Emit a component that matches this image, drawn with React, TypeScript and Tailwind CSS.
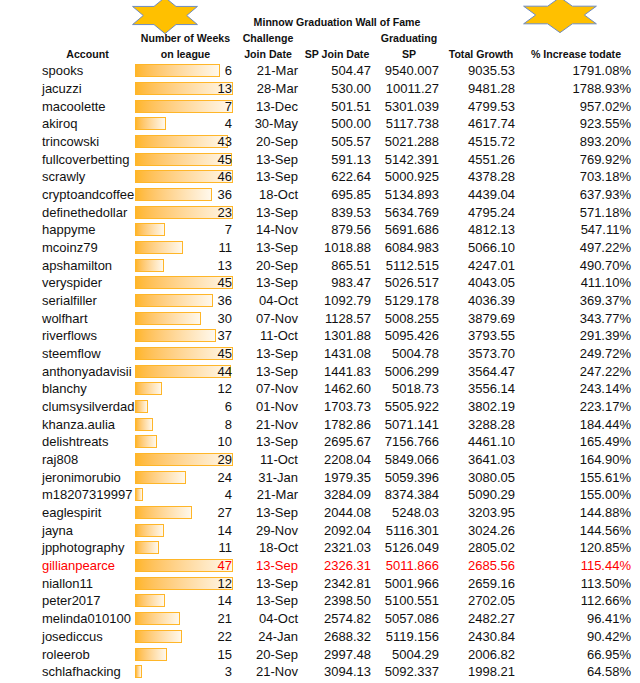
type Row = {
  name: string;
  weeks: string;
  bar: number;
  date: string;
  spJoin: string;
  gradSp: string;
  growth: string;
  pct: string;
  red?: boolean;
};

const ROWS: Row[] = [
  { name: "spooks", weeks: "6", bar: 85, date: "21-Mar", spJoin: "504.47", gradSp: "9540.007", growth: "9035.53", pct: "1791.08%" },
  { name: "jacuzzi", weeks: "13", bar: 98, date: "28-Mar", spJoin: "530.00", gradSp: "10011.27", growth: "9481.28", pct: "1788.93%" },
  { name: "macoolette", weeks: "7", bar: 98, date: "13-Dec", spJoin: "501.51", gradSp: "5301.039", growth: "4799.53", pct: "957.02%" },
  { name: "akiroq", weeks: "4", bar: 31, date: "30-May", spJoin: "500.00", gradSp: "5117.738", growth: "4617.74", pct: "923.55%" },
  { name: "trincowski", weeks: "43", bar: 93, date: "20-Sep", spJoin: "505.57", gradSp: "5021.288", growth: "4515.72", pct: "893.20%" },
  { name: "fullcoverbetting", weeks: "45", bar: 97, date: "13-Sep", spJoin: "591.13", gradSp: "5142.391", growth: "4551.26", pct: "769.92%" },
  { name: "scrawly", weeks: "46", bar: 98, date: "13-Sep", spJoin: "622.64", gradSp: "5000.925", growth: "4378.28", pct: "703.18%" },
  { name: "cryptoandcoffee", weeks: "36", bar: 77, date: "18-Oct", spJoin: "695.85", gradSp: "5134.893", growth: "4439.04", pct: "637.93%" },
  { name: "definethedollar", weeks: "23", bar: 98, date: "13-Sep", spJoin: "839.53", gradSp: "5634.769", growth: "4795.24", pct: "571.18%" },
  { name: "happyme", weeks: "7", bar: 30, date: "14-Nov", spJoin: "879.56", gradSp: "5691.686", growth: "4812.13", pct: "547.11%" },
  { name: "mcoinz79", weeks: "11", bar: 48, date: "13-Sep", spJoin: "1018.88", gradSp: "6084.983", growth: "5066.10", pct: "497.22%" },
  { name: "apshamilton", weeks: "13", bar: 29, date: "20-Sep", spJoin: "865.51", gradSp: "5112.515", growth: "4247.01", pct: "490.70%" },
  { name: "veryspider", weeks: "45", bar: 98, date: "13-Sep", spJoin: "983.47", gradSp: "5026.517", growth: "4043.05", pct: "411.10%" },
  { name: "serialfiller", weeks: "36", bar: 78, date: "04-Oct", spJoin: "1092.79", gradSp: "5129.178", growth: "4036.39", pct: "369.37%" },
  { name: "wolfhart", weeks: "30", bar: 66, date: "07-Nov", spJoin: "1128.57", gradSp: "5008.255", growth: "3879.69", pct: "343.77%" },
  { name: "riverflows", weeks: "37", bar: 81, date: "11-Oct", spJoin: "1301.88", gradSp: "5095.426", growth: "3793.55", pct: "291.39%" },
  { name: "steemflow", weeks: "45", bar: 98, date: "13-Sep", spJoin: "1431.08", gradSp: "5004.78", growth: "3573.70", pct: "249.72%" },
  { name: "anthonyadavisii", weeks: "44", bar: 96, date: "13-Sep", spJoin: "1441.83", gradSp: "5006.299", growth: "3564.47", pct: "247.22%" },
  { name: "blanchy", weeks: "12", bar: 27, date: "07-Nov", spJoin: "1462.60", gradSp: "5018.73", growth: "3556.14", pct: "243.14%" },
  { name: "clumsysilverdad", weeks: "6", bar: 13, date: "01-Nov", spJoin: "1703.73", gradSp: "5505.922", growth: "3802.19", pct: "223.17%" },
  { name: "khanza.aulia", weeks: "8", bar: 18, date: "21-Nov", spJoin: "1782.86", gradSp: "5071.141", growth: "3288.28", pct: "184.44%" },
  { name: "delishtreats", weeks: "10", bar: 22, date: "13-Sep", spJoin: "2695.67", gradSp: "7156.766", growth: "4461.10", pct: "165.49%" },
  { name: "raj808", weeks: "29", bar: 98, date: "11-Oct", spJoin: "2208.04", gradSp: "5849.066", growth: "3641.03", pct: "164.90%" },
  { name: "jeronimorubio", weeks: "24", bar: 51, date: "31-Jan", spJoin: "1979.35", gradSp: "5059.396", growth: "3080.05", pct: "155.61%" },
  { name: "m18207319997", weeks: "4", bar: 8, date: "21-Mar", spJoin: "3284.09", gradSp: "8374.384", growth: "5090.29", pct: "155.00%" },
  { name: "eaglespirit", weeks: "27", bar: 57, date: "13-Sep", spJoin: "2044.08", gradSp: "5248.03", growth: "3203.95", pct: "144.88%" },
  { name: "jayna", weeks: "14", bar: 29, date: "29-Nov", spJoin: "2092.04", gradSp: "5116.301", growth: "3024.26", pct: "144.56%" },
  { name: "jpphotography", weeks: "11", bar: 24, date: "18-Oct", spJoin: "2321.03", gradSp: "5126.049", growth: "2805.02", pct: "120.85%" },
  { name: "gillianpearce", weeks: "47", bar: 98, date: "13-Sep", spJoin: "2326.31", gradSp: "5011.866", growth: "2685.56", pct: "115.44%", red: true },
  { name: "niallon11", weeks: "12", bar: 98, date: "13-Sep", spJoin: "2342.81", gradSp: "5001.966", growth: "2659.16", pct: "113.50%" },
  { name: "peter2017", weeks: "14", bar: 30, date: "13-Sep", spJoin: "2398.50", gradSp: "5100.551", growth: "2702.05", pct: "112.66%" },
  { name: "melinda010100", weeks: "21", bar: 45, date: "04-Oct", spJoin: "2574.82", gradSp: "5057.086", growth: "2482.27", pct: "96.41%" },
  { name: "josediccus", weeks: "22", bar: 47, date: "24-Jan", spJoin: "2688.32", gradSp: "5119.156", growth: "2430.84", pct: "90.42%" },
  { name: "roleerob", weeks: "15", bar: 32, date: "20-Sep", spJoin: "2997.48", gradSp: "5004.29", growth: "2006.82", pct: "66.95%" },
  { name: "schlafhacking", weeks: "3", bar: 7, date: "21-Nov", spJoin: "3094.13", gradSp: "5092.337", growth: "1998.21", pct: "64.58%" },
  { name: "", weeks: "", bar: 19, date: "", spJoin: "", gradSp: "", growth: "", pct: "" },
];

const COLS = "grid grid-cols-[95px_101px_64px_74px_70px_74px_116px]";

// excel "6-point star" shape, stretched to its box
function Star({ className }: { className: string }) {
  return (
    <svg className={className} viewBox="0 0 120 100" preserveAspectRatio="none">
      <polygon
        points="60,1 80,25.5 119,25.5 99.5,50 119,74.5 80,74.5 60,99 40,74.5 1,74.5 20.5,50 1,25.5 40,25.5"
        fill="#ffc000"
        stroke="#6f8cc0"
        strokeWidth="1"
        vectorEffect="non-scaling-stroke"
      />
    </svg>
  );
}

function DataRow({ row }: { row: Row }) {
  const tone = row.red ? "text-[#ff0000]" : "text-[#111]";
  return (
    <div className={`${COLS} h-[17.68px] items-center text-[13px] leading-none ${tone}`}>
      <div className="pl-[2px] whitespace-nowrap">{row.name}</div>
      <div className="grid h-full items-center">
        <div
          className="col-start-1 row-start-1 h-[13px] border border-[#ffb628] bg-linear-to-r from-[#ffb628] to-[#fff8ec]"
          style={{ width: row.bar }}
        />
        <div className="col-start-1 row-start-1 justify-self-end pr-[4px]">{row.weeks}</div>
      </div>
      <div className="text-right pr-[2px]">{row.date}</div>
      <div className="text-right pr-[3px]">{row.spJoin}</div>
      <div className="text-right pr-[5px]">{row.gradSp}</div>
      <div className="text-right pr-[3px]">{row.growth}</div>
      <div className="text-right pr-[3px]">{row.pct}</div>
    </div>
  );
}

export default function App() {
  return (
    <div className="relative w-[640px] h-[683px] overflow-hidden bg-white font-['Liberation_Sans',Arial,sans-serif]">
      <Star className="absolute left-[132px] top-[-3px] w-[66px] h-[37px]" />
      <Star className="absolute left-[523px] top-[-3px] w-[74px] h-[36px]" />

      <div className="pt-[14px] pl-[40px]">
        <div className="text-[10.6px] font-bold text-[#111] leading-none">
          <div className="h-[16px] flex items-center justify-center w-[594px]">Minnow Graduation Wall of Fame</div>
          <div className={`${COLS} h-[16px] items-center text-center`}>
            <div />
            <div>Number of Weeks</div>
            <div>Challenge</div>
            <div />
            <div>Graduating</div>
            <div />
            <div />
          </div>
          <div className={`${COLS} h-[16px] items-center text-center whitespace-nowrap`}>
            <div>Account</div>
            <div>on league</div>
            <div>Join Date</div>
            <div>SP Join Date</div>
            <div>SP</div>
            <div>Total Growth</div>
            <div>% Increase todate</div>
          </div>
        </div>

        {ROWS.map((r, i) => (
          <DataRow key={i} row={r} />
        ))}
      </div>
    </div>
  );
}
